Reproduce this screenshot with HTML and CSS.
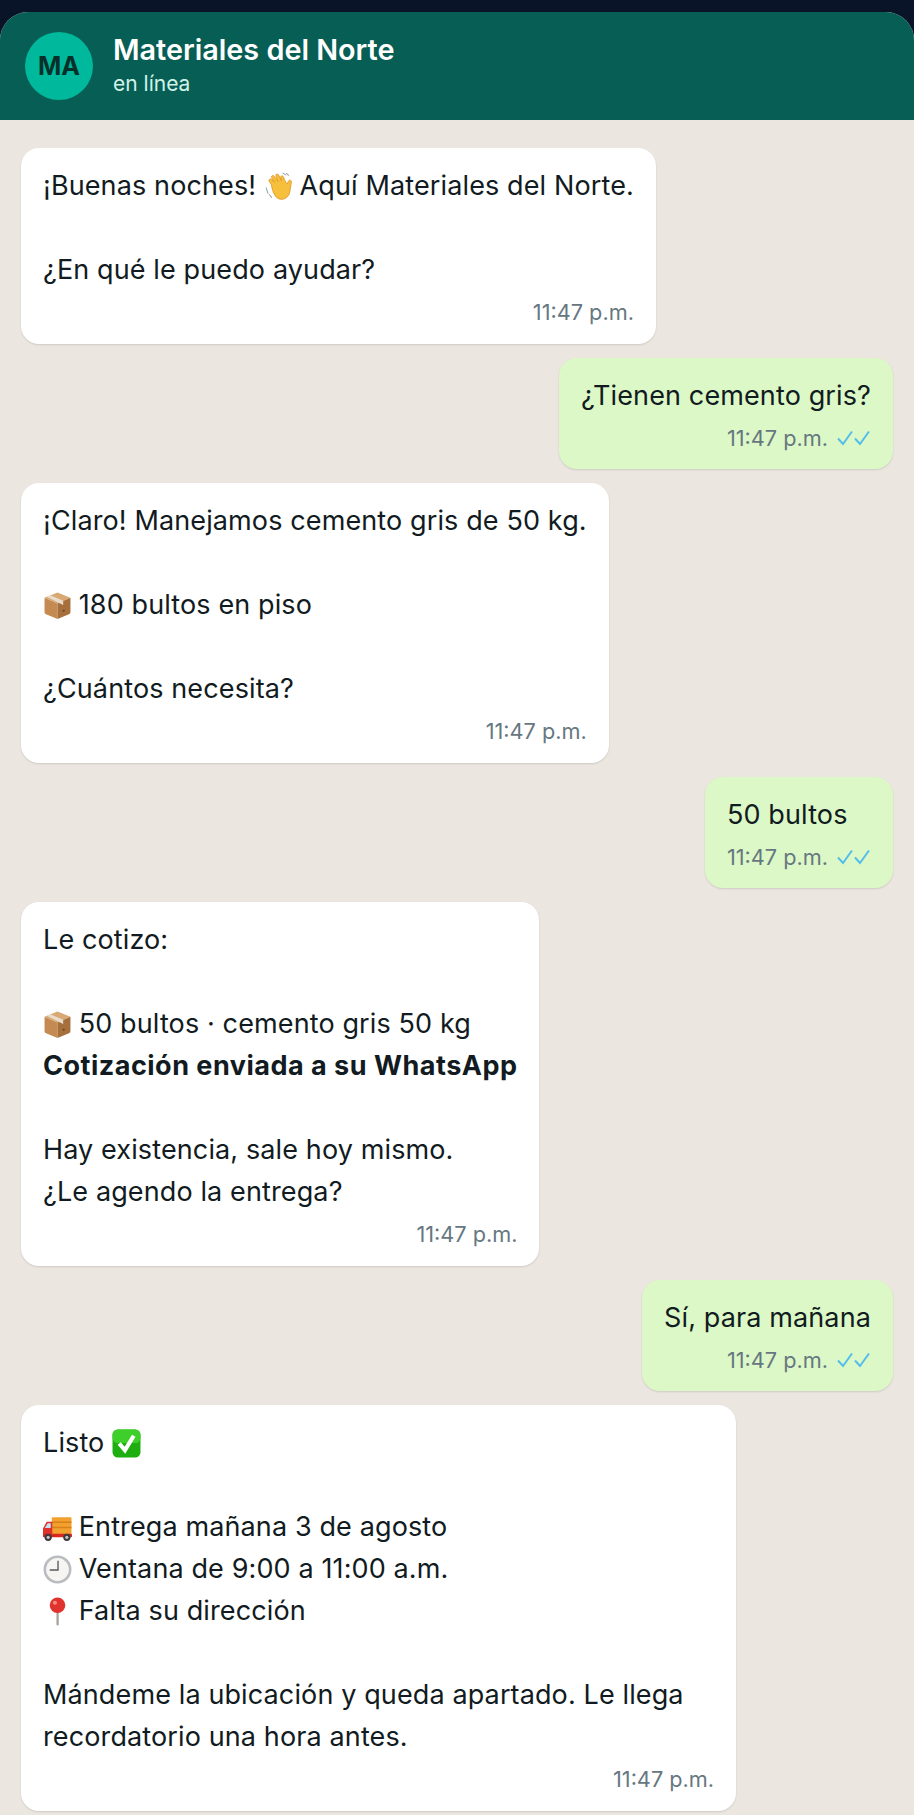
FILE: index.html
```html
<!DOCTYPE html>
<html lang="es">
<head>
    <meta charset="UTF-8">
    <meta name="viewport" content="width=device-width, initial-scale=1.0">
    <title>Materiales del Norte</title>
    <link rel="stylesheet" href="styles.css">
</head>
<body>
    <svg class="defs" width="0" height="0" aria-hidden="true">
        <defs>
            <symbol id="leidos" viewBox="0 0 34 18">
                <path d="M1.5 9.5 L6.5 15 L15.5 2.5" fill="none" stroke="currentColor" stroke-width="2"/>
                <path d="M18.5 9.5 L23.5 15 L32.5 2.5" fill="none" stroke="currentColor" stroke-width="2"/>
            </symbol>
            <symbol id="caja" viewBox="0 0 28 28">
                <path d="M14 1.5 L26.5 6.5 L14 12 L1.5 6.5 Z" fill="#d9a873"/>
                <path d="M1.5 6.5 L14 12 V27 L3 22.5 Q1.5 22 1.5 20.5 Z" fill="#c48a52"/>
                <path d="M26.5 6.5 L14 12 V27 L25 22.5 Q26.5 22 26.5 20.5 Z" fill="#a66f3c"/>
                <path d="M7 4 L19.5 9.5 V13.5 L15.5 11.5 L3.5 5.5 Z" fill="#e8dccb"/>
                <circle cx="20" cy="19" r="1" fill="#6b4423"/>
            </symbol>
            <symbol id="mano" viewBox="0 0 28 28">
                <path d="M7 12 C5 9 4 8 5.5 7 C7 6 8.500 8 10 10 L7.500 5.500 C6.500 4 8.500 2.500 9.800 4 L13.500 9 L11.500 3.800 C11 2 13.200 1.200 14.200 3 L17 8.500 L16.200 5.200 C16 3.500 18 3 18.800 4.800 C20 8 21 10 22.500 11.500 L23.500 9 C24.500 7 27 8 26.500 10 C25.800 13 25.500 16 25 19 C24 25 18 28 13.500 25.500 C10 23.500 8 18 7 12 Z" fill="#f7c03c" stroke="#d98e1c" stroke-width=".7"/>
                <path d="M2 15 L4 21 M5 21.500 L7.500 25 M18 1 L21.500 3 M21.500 1 L24 3.500" fill="none" stroke="#9fa6ad" stroke-width="1"/>
            </symbol>
            <symbol id="visto" viewBox="0 0 28 28">
                <rect x="0.500" y="0.500" width="27" height="27" rx="5" fill="#1fae12"/>
                <rect x="0.500" y="0.500" width="27" height="13" rx="5" fill="#3fcf2a"/>
                <path d="M7 14 L12.500 20.500 L21 6.500" fill="none" stroke="#fff" stroke-width="4"/>
            </symbol>
            <symbol id="camion" viewBox="0 0 28 28">
                <rect x="8.500" y="4" width="19" height="16.500" rx="1" fill="#f2a12e"/>
                <path d="M8.500 9 H27.500 M8.500 14 H27.500" stroke="#d97f1b" stroke-width="1.500"/>
                <path d="M0 15 L3.500 8.500 H9 V23 H0 Z" fill="#e0322c"/>
                <path d="M1.800 14.500 L4.500 10 H7.500 V14.500 Z" fill="#bfe3f5"/>
                <rect x="0" y="20" width="28" height="3.500" rx="1" fill="#d8271f"/>
                <circle cx="5" cy="23.500" r="3.500" fill="#3a3a3c"/>
                <circle cx="5" cy="23.500" r="1.500" fill="#c8c8cc"/>
                <circle cx="23" cy="23.500" r="3.500" fill="#3a3a3c"/>
                <circle cx="23" cy="23.500" r="1.500" fill="#c8c8cc"/>
            </symbol>
            <symbol id="reloj" viewBox="0 0 28 28">
                <circle cx="14" cy="14" r="13.500" fill="#b9bcc1"/>
                <circle cx="14" cy="14" r="11" fill="#f6f5f2"/>
                <path d="M14.500 5.500 V14.500 H6.500" fill="none" stroke="#55585e" stroke-width="1.300"/>
            </symbol>
            <symbol id="pin" viewBox="0 0 28 28">
                <rect x="13" y="12" width="2.200" height="15.500" rx="1" fill="#a8a29a"/>
                <circle cx="14" cy="8" r="7.500" fill="#e0332e"/>
                <circle cx="11.500" cy="5.500" r="2" fill="#f58a80"/>
            </symbol>
        </defs>
    </svg>

    <div class="phone">
        <header class="cabecera">
            <div class="avatar">MA</div>
            <div class="contacto">
                <div class="nombre">Materiales del Norte</div>
                <div class="estado">en línea</div>
            </div>
        </header>

        <main class="chat">
            <div class="burbuja recibida">
                <p>¡Buenas noches! <svg class="emoji"><use href="#mano"/></svg> Aquí Materiales del Norte.<br><br>¿En qué le puedo ayudar?</p>
                <div class="meta">11:47 p.m.</div>
            </div>

            <div class="burbuja enviada">
                <p>¿Tienen cemento gris?</p>
                <div class="meta">11:47 p.m. <svg class="checks"><use href="#leidos"/></svg></div>
            </div>

            <div class="burbuja recibida">
                <p>¡Claro! Manejamos cemento gris de 50 kg.<br><br><svg class="emoji"><use href="#caja"/></svg> 180 bultos en piso<br><br>¿Cuántos necesita?</p>
                <div class="meta">11:47 p.m.</div>
            </div>

            <div class="burbuja enviada">
                <p>50 bultos</p>
                <div class="meta">11:47 p.m. <svg class="checks"><use href="#leidos"/></svg></div>
            </div>

            <div class="burbuja recibida">
                <p>Le cotizo:<br><br><svg class="emoji"><use href="#caja"/></svg> 50 bultos · cemento gris 50 kg<br><strong>Cotización enviada a su WhatsApp</strong><br><br>Hay existencia, sale hoy mismo.<br>¿Le agendo la entrega?</p>
                <div class="meta">11:47 p.m.</div>
            </div>

            <div class="burbuja enviada">
                <p>Sí, para mañana</p>
                <div class="meta">11:47 p.m. <svg class="checks"><use href="#leidos"/></svg></div>
            </div>

            <div class="burbuja recibida">
                <p>Listo <svg class="emoji"><use href="#visto"/></svg><br><br><svg class="emoji"><use href="#camion"/></svg> Entrega mañana 3 de agosto<br><svg class="emoji"><use href="#reloj"/></svg> Ventana de 9:00 a 11:00 a.m.<br><svg class="emoji"><use href="#pin"/></svg> Falta su dirección<br><br>Mándeme la ubicación y queda apartado. Le llega recordatorio una hora antes.</p>
                <div class="meta">11:47 p.m.</div>
            </div>
        </main>
    </div>
</body>
</html>
```

FILE: styles.css
```css
/* General */
html, body {
    height: 100%;
}

body {
    margin: 0;
    overflow: hidden;
    background-color: #0a1428;
    font-family: Inter, "Noto Sans", sans-serif;
    color: #111b21;
}

.defs {
    position: absolute;
}

.phone {
    margin-top: 12px;
    height: 1803px;
    overflow: hidden;
    background-color: #ebe6df;
    border-radius: 28px 28px 0 0;
}

/* Header */
.cabecera {
    display: flex;
    align-items: center;
    gap: 20px;
    height: 108px;
    padding: 0 25px;
    background-color: #075e54;
    color: #fff;
}

.avatar {
    display: flex;
    align-items: center;
    justify-content: center;
    width: 68px;
    height: 68px;
    border-radius: 50%;
    background-color: #00b89b;
    color: #06302a;
    font-size: 25px;
    font-weight: 700;
}

.contacto {
    padding-bottom: 2px;
}

.nombre {
    font-size: 28.8px;
    font-weight: 600;
    line-height: 36px;
}

.estado {
    margin-top: 2px;
    font-size: 21px;
    line-height: 28px;
    color: #d1f2e8;
}

/* Messages */
.chat {
    display: flex;
    flex-direction: column;
    gap: 14px;
    padding: 28px 21px;
}

.burbuja {
    box-sizing: border-box;
    max-width: 82%;
    padding: 17px 22px 19px;
    border-radius: 18px;
    box-shadow: 0 1px 2px rgba(0, 0, 0, 0.12);
    font-size: 27px;
    line-height: 42px;
    letter-spacing: 0.12px;
}

.burbuja p {
    margin: 0;
}

.burbuja strong {
    font-weight: 700;
    letter-spacing: 0.5px;
}

.recibida {
    align-self: flex-start;
    background-color: #fff;
}

.enviada {
    align-self: flex-end;
    padding-bottom: 18px;
    background-color: #dcf8c6;
}

.meta {
    display: flex;
    justify-content: flex-end;
    align-items: center;
    gap: 8px;
    margin-top: 8px;
    font-size: 21.7px;
    line-height: 26px;
    letter-spacing: 0;
    color: #667781;
}

.checks {
    width: 35px;
    height: 18px;
    color: #53bdeb;
}

.emoji {
    width: 29px;
    height: 29px;
    margin-right: -1px;
    vertical-align: -6px;
}
```
